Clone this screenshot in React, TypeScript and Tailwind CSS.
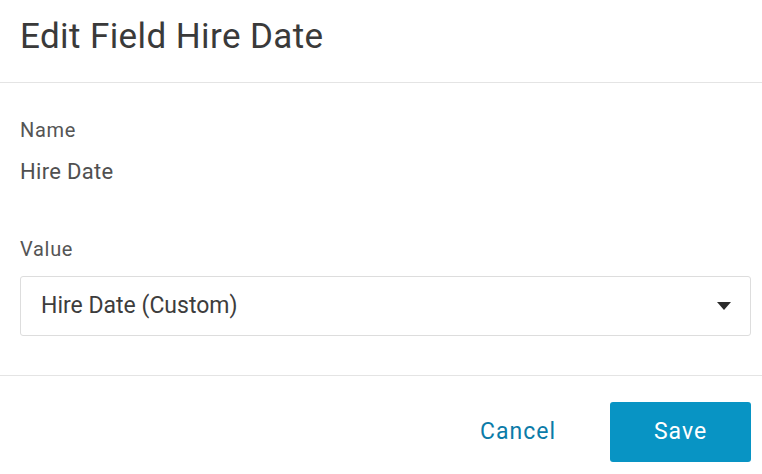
import React from "react";

export default function App() {
  return (
    <div className="w-[762px] h-[474px] bg-white overflow-hidden" style={{ fontFamily: "Roboto, 'Open Sans', sans-serif" }}>
      <div className="h-[83px] border-b border-[#e4e4e4] flex items-center px-[20px] pb-[9px]">
        <h1 className="text-[35px] text-[#3a3a3a] leading-none tracking-[0.4px]">Edit Field Hire Date</h1>
      </div>
      <div className="px-[20px] pt-[35px] h-[293px] border-b border-[#e4e4e4]">
        <div className="text-[20px] text-[#555555] leading-[24px] tracking-[0.7px]">Name</div>
        <div className="text-[22px] text-[#505050] leading-[26px] tracking-[0.3px] mt-[17px]">Hire Date</div>
        <div className="text-[20px] text-[#555555] leading-[24px] tracking-[0.7px] mt-[52px]">Value</div>
        <div className="mt-[15px] h-[60px] w-[731px] border border-[#dddddd] rounded-[3px] flex items-center justify-between pl-[20px] pr-[19px]">
          <span className="text-[23px] text-[#3d3d3d] leading-[28px]">Hire Date (Custom)</span>
          <svg width="14" height="8" viewBox="0 0 14 8"><path d="M0 0 L14 0 L7 8 Z" fill="#2b2b2b" /></svg>
        </div>
      </div>
      <div className="flex justify-end items-center gap-[54px] pr-[11px] pt-[26px]">
        <button className="text-[23px] text-[#0b7ba8] tracking-[1px] leading-[28px]">Cancel</button>
        <button className="w-[141px] h-[60px] rounded-[3px] bg-[#0894c4] text-white text-[23px] tracking-[1px] leading-[28px]">Save</button>
      </div>
    </div>
  );
}
